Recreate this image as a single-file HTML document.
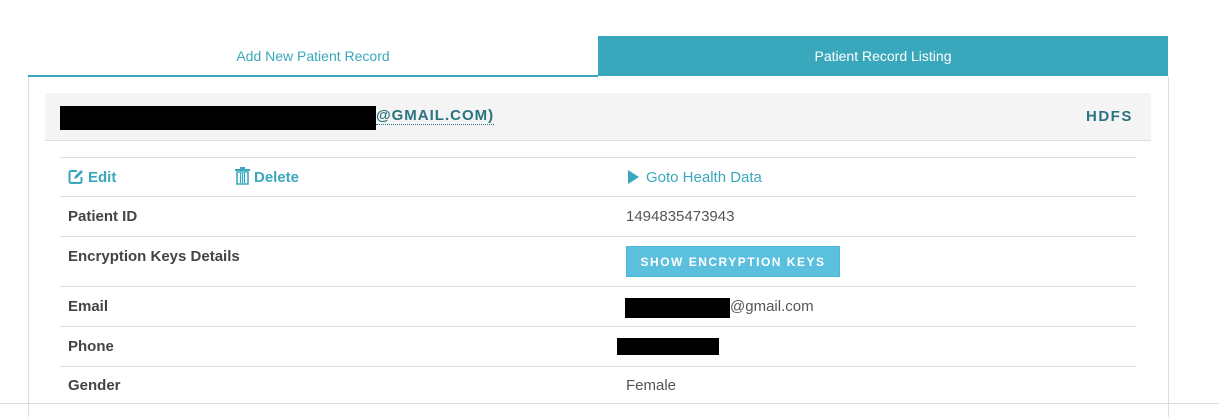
<!DOCTYPE html>
<html><head><style>
body{margin:0;width:1219px;height:405px;background:#fff;font-family:"Liberation Sans",sans-serif;position:relative;overflow:hidden}
.a{position:absolute}
.tab{top:36px;height:40px;line-height:40px;text-align:center;font-size:14px}
.row{position:absolute;left:60px;width:1076px;border-top:1px solid #ddd}
.lab{position:absolute;left:8px;font-weight:bold;font-size:15px;color:#444}
.val{position:absolute;left:566px;font-size:15px;color:#555}
.blk{position:absolute;background:#000}
</style></head><body>
<div class="a tab" style="left:28px;width:570px;color:#3aa8bc;border-bottom:2px solid #3aa8bc;height:39px">Add New Patient Record</div>
<div class="a tab" style="left:598px;width:570px;background:#3aa8bc;color:#fff">Patient Record Listing</div>
<div class="a" style="left:28px;top:77px;width:1139px;height:340px;border-left:1px solid #ddd;border-right:1px solid #ddd"></div>
<div class="a" style="left:0;top:403px;width:1219px;border-top:1px solid #ddd"></div>
<div class="a" style="left:45px;top:93px;width:1106px;height:47px;background:#f4f4f4;border-bottom:1px solid #ddd"></div>
<div class="blk" style="left:60px;top:106px;width:316px;height:24px"></div>
<div class="a" style="left:376px;top:108px;font-size:15px;font-weight:bold;letter-spacing:1px;color:#2a7480;border-bottom:1px dotted #2a7480;line-height:16px">@GMAIL.COM)</div>
<div class="a" style="left:1086px;top:108px;font-size:15px;font-weight:bold;letter-spacing:1.5px;color:#2a7480">HDFS</div>
<div class="row" style="top:157px;height:39px">
 <svg class="a" style="left:8px;top:11px" width="16" height="16" viewBox="0 0 16 16"><path d="M9 2H3a1.5 1.5 0 0 0-1.5 1.5v9A1.5 1.5 0 0 0 3 14h9a1.5 1.5 0 0 0 1.5-1.5V8" fill="none" stroke="#3aa8bc" stroke-width="2"/><path d="M6 10l1-3 6-6 2 2-6 6z" fill="#3aa8bc"/></svg>
 <div class="a" style="left:28px;top:11px;font-size:15px;font-weight:bold;color:#3aa8bc">Edit</div>
 <svg class="a" style="left:175px;top:9px" width="15" height="18" viewBox="0 0 15 18"><rect x="0" y="2" width="15" height="2" fill="#3aa8bc"/><rect x="5" y="0" width="5" height="2" fill="#3aa8bc"/><path d="M2 5h11v12H2z" fill="none" stroke="#3aa8bc" stroke-width="1.6"/><path d="M5.5 6v10M7.5 6v10M9.5 6v10" stroke="#3aa8bc" stroke-width="1.2"/></svg>
 <div class="a" style="left:194px;top:11px;font-size:15px;font-weight:bold;color:#3aa8bc">Delete</div>
 <svg class="a" style="left:568px;top:12px" width="11" height="14"><path d="M0 0L11 7L0 14z" fill="#3aa8bc"/></svg>
 <div class="a" style="left:586px;top:11px;font-size:15px;color:#3aa8bc">Goto Health Data</div>
</div>
<div class="row" style="top:196px;height:40px"><div class="lab" style="top:11px">Patient ID</div><div class="val" style="top:11px">1494835473943</div></div>
<div class="row" style="top:236px;height:50px"><div class="lab" style="top:11px">Encryption Keys Details</div>
 <div class="a" style="left:566px;top:9px;width:214px;height:31px;background:#5bc0de;border:1px solid #46b8da;box-sizing:border-box;color:#fff;font-size:12px;font-weight:bold;letter-spacing:1.5px;text-align:center;line-height:30px">SHOW ENCRYPTION KEYS</div></div>
<div class="row" style="top:286px;height:40px"><div class="lab" style="top:11px">Email</div><div class="blk" style="left:565px;top:11px;width:105px;height:20px"></div><div class="val" style="left:670px;top:11px">@gmail.com</div></div>
<div class="row" style="top:326px;height:40px"><div class="lab" style="top:11px">Phone</div><div class="blk" style="left:557px;top:11px;width:102px;height:17px"></div></div>
<div class="row" style="top:366px;height:40px"><div class="lab" style="top:10px">Gender</div><div class="val" style="top:10px">Female</div></div>
</body></html>
